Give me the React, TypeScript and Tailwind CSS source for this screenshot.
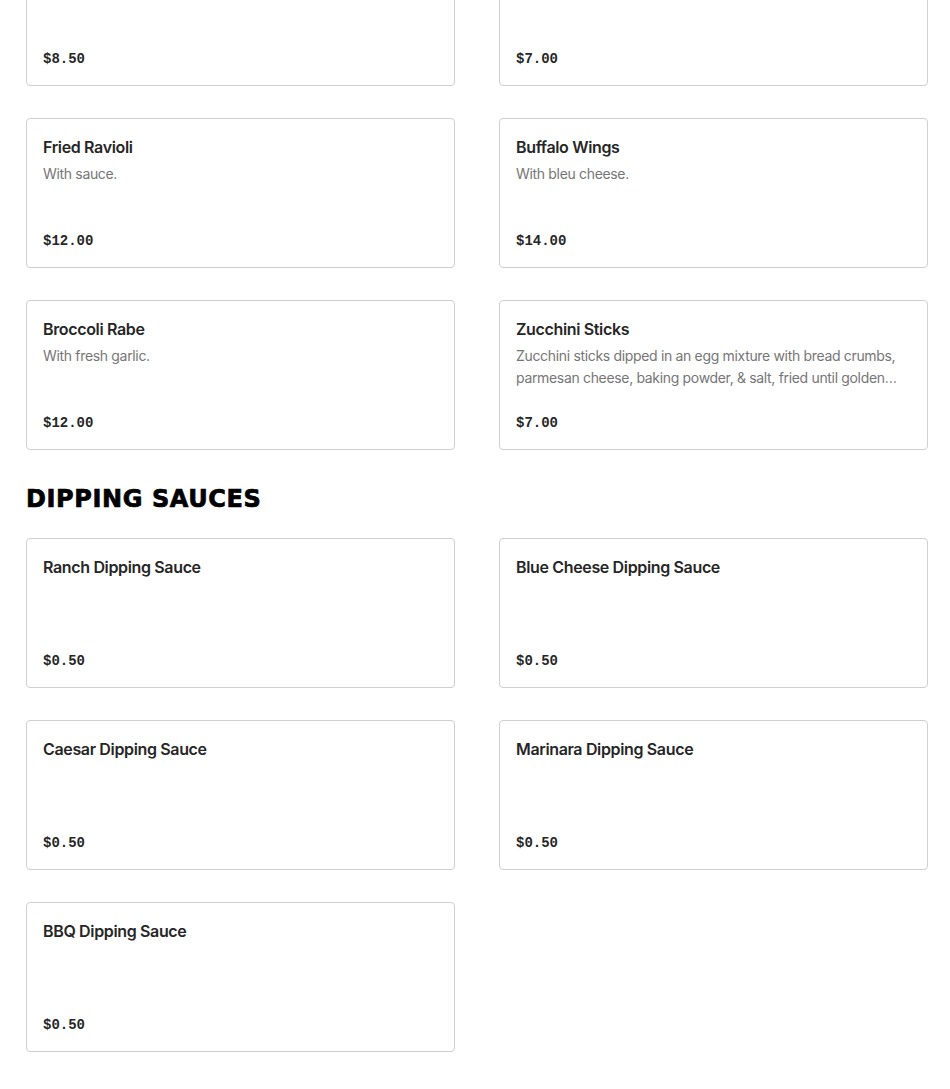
import React from "react";

type Item = { name: string; desc?: string; price: string };

const top: Item[] = [
  { name: "Mozzarella Sticks", price: "$8.50" },
  { name: "Garlic Knots", price: "$7.00" },
  { name: "Fried Ravioli", desc: "With sauce.", price: "$12.00" },
  { name: "Buffalo Wings", desc: "With bleu cheese.", price: "$14.00" },
  { name: "Broccoli Rabe", desc: "With fresh garlic.", price: "$12.00" },
  {
    name: "Zucchini Sticks",
    desc: "Zucchini sticks dipped in an egg mixture with bread crumbs, parmesan cheese, baking powder, & salt, fried until golden brown and served with a side of marinara sauce.",
    price: "$7.00",
  },
];

const sauces: Item[] = [
  { name: "Ranch Dipping Sauce", price: "$0.50" },
  { name: "Blue Cheese Dipping Sauce", price: "$0.50" },
  { name: "Caesar Dipping Sauce", price: "$0.50" },
  { name: "Marinara Dipping Sauce", price: "$0.50" },
  { name: "BBQ Dipping Sauce", price: "$0.50" },
];

const sans = { fontFamily: "Inter, 'Liberation Sans', sans-serif" };

function Card({ item }: { item: Item }) {
  return (
    <div className="flex h-[150px] flex-col rounded-[4px] border border-[#cfcfcf] bg-white px-4 pt-4 pb-[15px]">
      <div className="text-[16px] leading-[24px] font-semibold tracking-[-0.35px] text-[#262626]" style={sans}>
        {item.name}
      </div>
      {item.desc && (
        <div className="mt-[4px] line-clamp-2 text-[14px] leading-[22px] tracking-[-0.33px] text-[#767676]" style={sans}>
          {item.desc}
        </div>
      )}
      <div className="mt-auto text-[14px] leading-[22px] font-bold text-[#262626]" style={{ fontFamily: "'Liberation Mono', monospace" }}>
        {item.price}
      </div>
    </div>
  );
}

function Heading({ children }: { children: React.ReactNode }) {
  return (
    <h2
      className="mt-[33px] mb-[23px] text-[24px] leading-[32px] font-black tracking-[0.6px] text-black [-webkit-text-stroke:0.7px_black]"
      style={{ fontFamily: "'DejaVu Sans', 'Liberation Sans', sans-serif" }}
    >
      {children}
    </h2>
  );
}

export default function App() {
  return (
    <div className="min-h-[1089px] bg-white pr-[22px] pl-[26px]">
      <div className="-mt-[64px] grid grid-cols-2 gap-x-[44px] gap-y-[32px]">
        {top.map((it) => (
          <Card key={it.name} item={it} />
        ))}
      </div>
      <Heading>DIPPING SAUCES</Heading>
      <div className="grid grid-cols-2 gap-x-[44px] gap-y-[32px]">
        {sauces.map((it) => (
          <Card key={it.name} item={it} />
        ))}
      </div>
      <Heading>SALADS</Heading>
    </div>
  );
}
